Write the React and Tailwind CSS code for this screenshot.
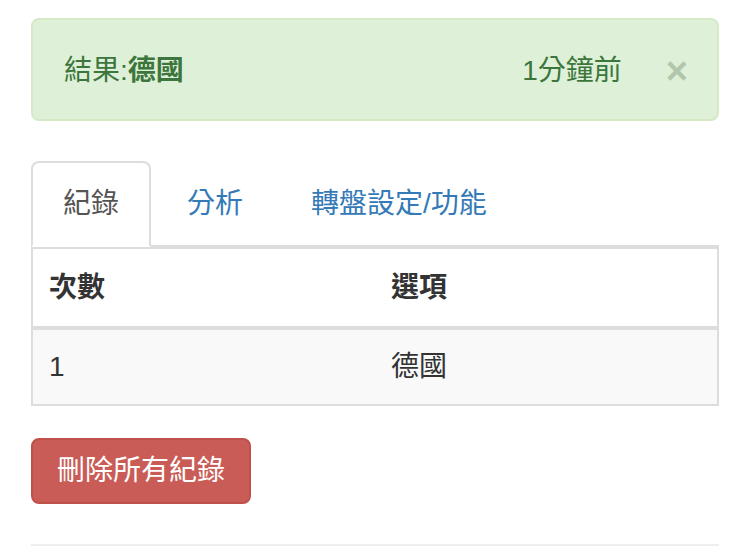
import React from 'react';

const font = { fontFamily: '"Liberation Sans", "Noto Sans CJK TC", sans-serif' };

const records = [{ id: 1, option: '德國' }];

const App = () => {
    return (
        <div className="w-[750px] h-[551px] bg-white px-[31px] pt-[18px] text-[28px] leading-[40px] text-[#333] font-['Liberation_Sans','Noto_Sans_CJK_TC',sans-serif]">
            {/* result alert */}
            <div className="flex items-center h-[103px] pl-[31px] pr-[31px] pt-[3px] bg-[#dff0d8] border-2 border-[#d6e9c6] rounded-[8px] text-[#3c763d]">
                <span>
                    結果:<b className="font-bold">德國</b>
                </span>
                <span className="ml-auto">1分鐘前</span>
                <span className="ml-[44px] -mr-[2px] text-[38px] leading-[40px] font-bold text-[#b2c6ab]">×</span>
            </div>

            {/* tabs */}
            <div className="mt-[40px] flex border-b-2 border-[#ddd]">
                <div className="-mb-[2px] px-[30px] pt-[21px] pb-[19px] bg-white border-2 border-[#ddd] border-b-transparent rounded-t-[8px] text-[#555]">
                    紀錄
                </div>
                <div className="ml-[4px] px-[30px] pt-[21px] pb-[19px] border-2 border-transparent text-[#337ab7]">分析</div>
                <div className="ml-[4px] px-[30px] pt-[21px] pb-[19px] border-2 border-transparent text-[#337ab7]">轉盤設定/功能</div>
            </div>

            {/* record table */}
            <div className="border-2 border-[#ddd]">
                <div className="grid grid-cols-2 h-[81px] border-b-4 border-[#ddd] font-bold">
                    <div className="flex items-center px-[16px]">次數</div>
                    <div className="flex items-center px-[16px]">選項</div>
                </div>
                {records.map((r) => (
                    <div key={r.id} className="grid grid-cols-2 h-[74px] bg-[#f9f9f9]">
                        <div className="flex items-center px-[16px]">{r.id}</div>
                        <div className="flex items-center px-[16px]">{r.option}</div>
                    </div>
                ))}
            </div>

            <button
                style={font}
                className="mt-[32px] px-[24px] py-[11px] text-[28px] leading-[40px] text-white bg-[#c95c56] border-2 border-[#c0504a] rounded-[8px]"
            >
                刪除所有紀錄
            </button>

            <div className="mt-[40px] border-t-2 border-[#eee]" />
        </div>
    );
};

export default App;
